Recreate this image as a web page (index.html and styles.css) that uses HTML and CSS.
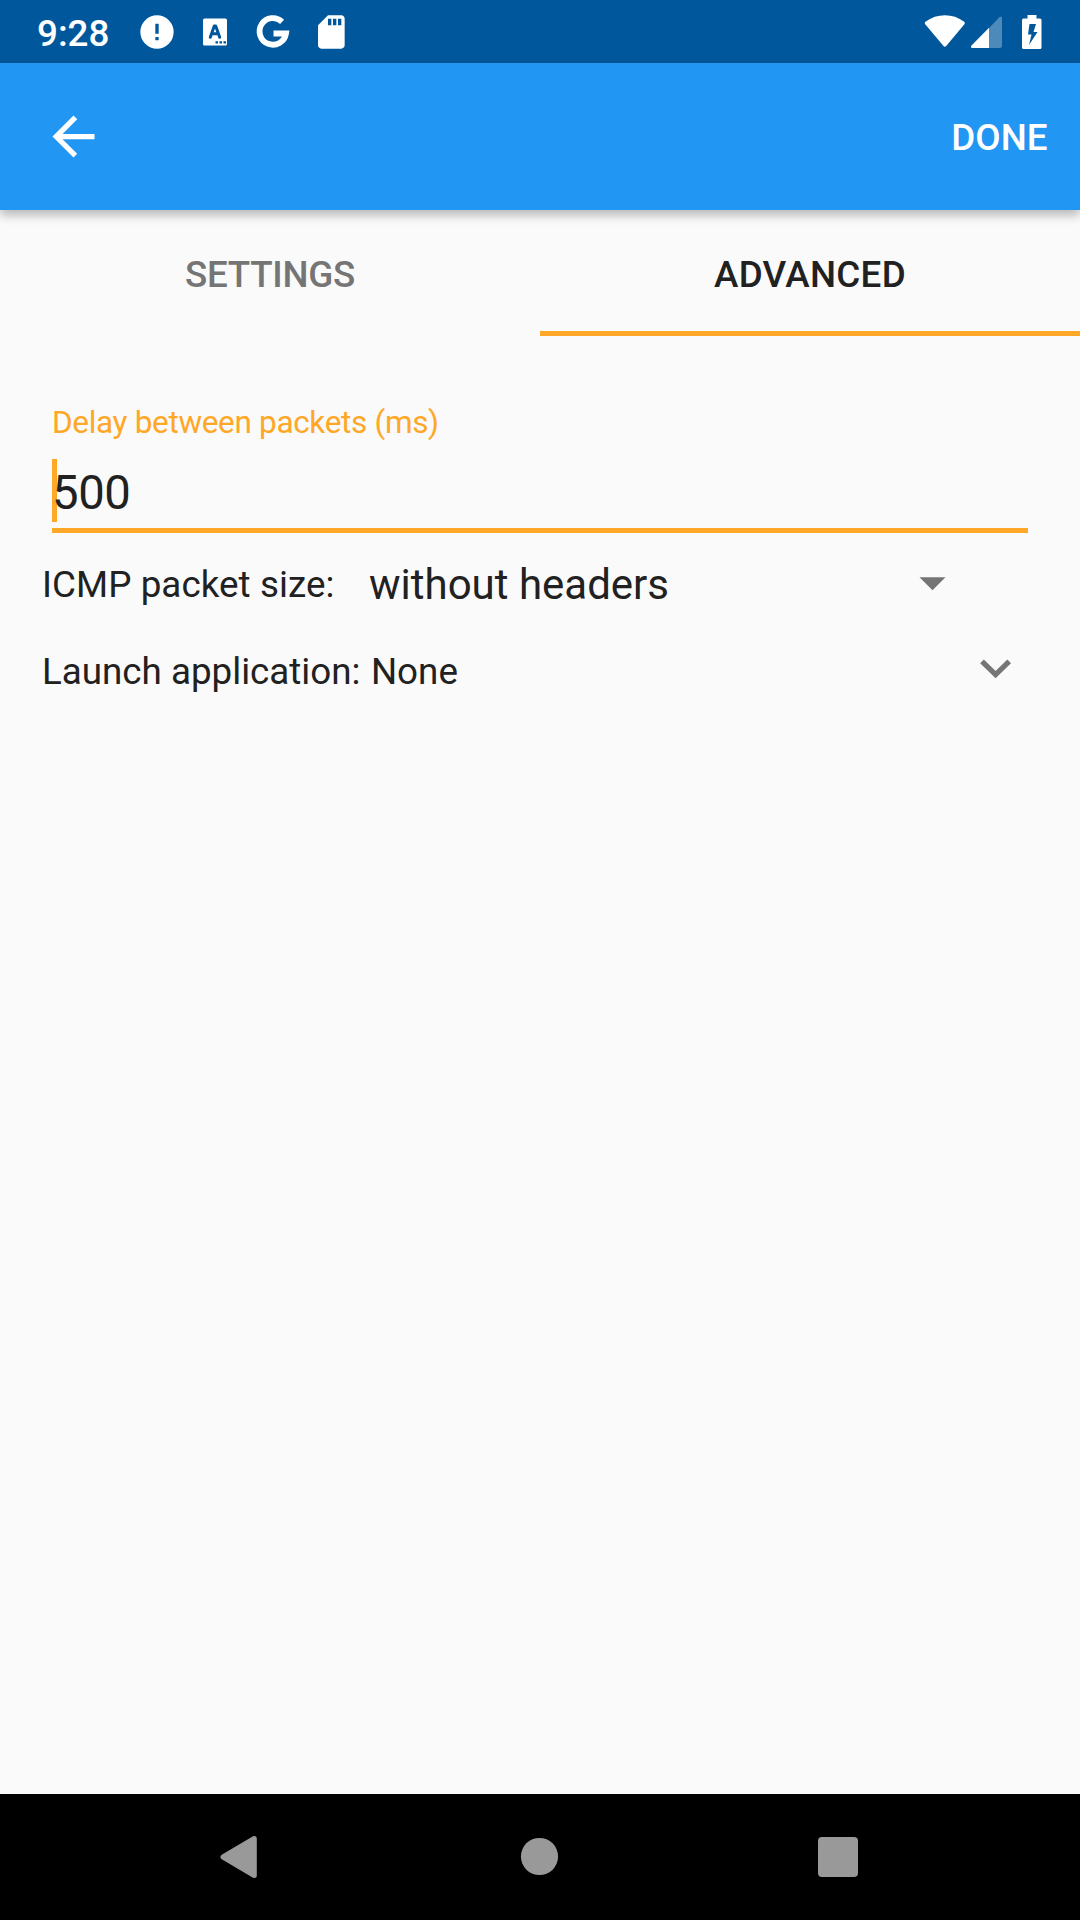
FILE: index.html
```html
<!DOCTYPE html>
<html lang="en">
<head>
<meta charset="utf-8">
<title>Advanced settings</title>
<link rel="stylesheet" href="styles.css">
</head>
<body>
<div class="screen">
  <div class="status">
    <span class="clock">9:28</span>
    <div class="notifications">
      <svg width="40" height="40" viewBox="0 0 24 24"><path fill="#fff" d="M12 2a10 10 0 1 0 0 20 10 10 0 0 0 0-20zm1 15h-2v-2h2v2zm0-4h-2V7h2v6z"/></svg>
      <svg width="40" height="40" viewBox="0 0 40 40"><rect x="8" y="6.500" width="24" height="27" rx="1.500" fill="#fff"/><path d="M15.300 25.300 19.300 14h1.400l4 11.300M16.800 21.800h6.500" fill="none" stroke="#01579b" stroke-width="3" stroke-linecap="round" stroke-linejoin="round"/><path d="M20.500 29.300h2.500v2.200h-2.500zM24.500 29.300H27v2.200h-2.500zM28.500 29.300H31v2.200h-2.500z" fill="#01579b"/></svg>
      <svg width="40" height="40" viewBox="0 0 40 40"><path d="M29.100 9.800A13.300 13.300 0 1 0 33 21.500H20.500" fill="none" stroke="#fff" stroke-width="5.800"/></svg>
      <svg width="40" height="40" viewBox="0 0 24 24"><path fill="#fff" d="M18.200 2h-8L4.220 8 4.200 20c0 1.100.9 2 2 2h12c1.100 0 2-.9 2-2V4c0-1.100-.9-2-2-2zm-6 6h-2V4h2v4zm3 0h-2V4h2v4zm3 0h-2V4h2v4z"/></svg>
    </div>
    <div class="system">
      <svg width="42" height="34" viewBox="0 0 42 34"><path d="M1.200 9.300Q-.1 8 1.400 6.800C13-1.800 29-1.800 40.200 6.800q1.400 1.200.2 2.500L22.200 31q-1.400 1.400-2.700 0z" fill="#fff"/></svg>
      <svg width="34" height="34" viewBox="0 0 34 34"><path d="M19 13 29.500 2.200Q32 .5 32 3.300V31q0 2-2 2H19z" fill="#fff" fill-opacity=".3"/><path d="M19 12.800V33H2.500Q0 32.500 1.500 30.500z" fill="#fff"/></svg>
      <svg class="battery" width="20" height="34" viewBox="0 0 20 34"><path fill="#fff" fill-rule="evenodd" d="M5.500 0h9v3.500H18q1.500 0 1.500 1.500v27.500Q19.500 34 18 34H1.500Q0 34 0 32.500V5q0-1.500 1.500-1.500h4zM7.500 9 6 19.500h3.500L7 30l8.500-13h-4L14 9z"/></svg>
    </div>
  </div>
  <header class="appbar">
    <svg width="63" height="63" viewBox="0 0 24 24"><path fill="#fff" d="M20 11H7.830l5.590-5.590L12 4l-8 8 8 8 1.410-1.410L7.830 13H20v-2z"/></svg>
    <span class="done">DONE</span>
  </header>
  <nav class="tabs">
    <div class="tab">SETTINGS</div>
    <div class="tab active">ADVANCED</div>
  </nav>
  <main class="form">
    <div class="field">
      <div class="label">Delay between packets (ms)</div>
      <div class="input"><span class="caret"></span><span class="value">500</span></div>
    </div>
    <div class="row packet">
      <span class="caption">ICMP packet size:</span>
      <span class="choice">without headers</span>
      <svg width="26" height="14" viewBox="0 0 26 14"><path d="M-.5.300h26l-13 13z" fill="#757575"/></svg>
    </div>
    <div class="row launch">
      <span>Launch application:</span>
      <span class="app">None</span>
      <svg width="32" height="20" viewBox="0 0 32 20"><path d="M2 2.300 15.600 15.700 29.200 2.300" fill="none" stroke="#757575" stroke-width="5.200"/></svg>
    </div>
  </main>
  <footer class="navbar">
    <svg width="38" height="44" viewBox="0 0 38 44"><path d="M3 22 34.300 3.500v37z" fill="#999" stroke="#999" stroke-width="5" stroke-linejoin="round"/></svg>
    <svg width="38" height="38" viewBox="0 0 38 38"><circle cx="20.500" cy="18.500" r="18.600" fill="#999"/></svg>
    <svg width="40" height="40" viewBox="0 0 40 40"><rect width="40" height="40" rx="4" fill="#999"/></svg>
  </footer>
</div>
</body>
</html>
```
FILE: styles.css
```css
* { box-sizing: border-box; }
body { margin: 0; font-family: Roboto, sans-serif; font-size: 36.75px; line-height: 44px; color: #212121; }
svg { display: block; flex: none; overflow: visible; }
.screen { display: flex; flex-direction: column; width: 1080px; height: 1920px; background: #fafafa; overflow: hidden; }

.status { display: flex; align-items: center; height: 63px; padding: 0 38px 0 37px; background: #01579b; color: #fff; }
.clock { width: 100px; padding-top: 4px; font-weight: 500; }
.notifications { display: flex; gap: 18px; }
.system { display: flex; margin-left: auto; }
.system svg + svg { margin-left: 4px; }
.system .battery { margin-left: 18px; }

.appbar { display: flex; align-items: center; justify-content: space-between; height: 147px; padding: 0 32.500px 0 42px; background: #2196f3; color: #fff; font-weight: 500; box-shadow: 0 5px 10px rgba(0, 0, 0, .28); }
.done { padding-top: 2px; }

.tabs { display: flex; height: 126px; font-weight: 500; }
.tab { flex: 1; padding-top: 43px; text-align: center; color: #757575; letter-spacing: -.25px; border-bottom: 5px solid transparent; }
.tab.active { color: #212121; letter-spacing: .3px; border-color: #ffa726; }

.form { flex: 1; padding-top: 68px; }
.field { width: 976px; margin-left: 52px; }
.label { height: 37px; font-size: 31.5px; line-height: 38px; letter-spacing: -.33px; color: #ffa726; }
.input { display: flex; height: 92px; padding-top: 18px; border-bottom: 5px solid #ffa726; font-size: 47.25px; line-height: 69px; letter-spacing: -.4px; }
.caret { width: 5px; height: 63px; margin-right: -5px; background: #ffa726; }
.value { position: relative; }

.row { display: flex; align-items: center; }
.packet { height: 87px; padding: 16px 134px 0 42px; }
.packet svg { margin-bottom: 2px; }
.caption { width: 327px; letter-spacing: .07px; }
.choice { flex: 1; font-size: 42px; }
.launch { height: 87px; padding: 16px 68px 0 42px; }
.launch svg { margin-bottom: 6px; }
.app { flex: 1; margin-left: 10.500px; }

.navbar { display: flex; align-items: center; justify-content: space-between; height: 126px; padding: 0 222px 0 220px; background: #000; }
```
